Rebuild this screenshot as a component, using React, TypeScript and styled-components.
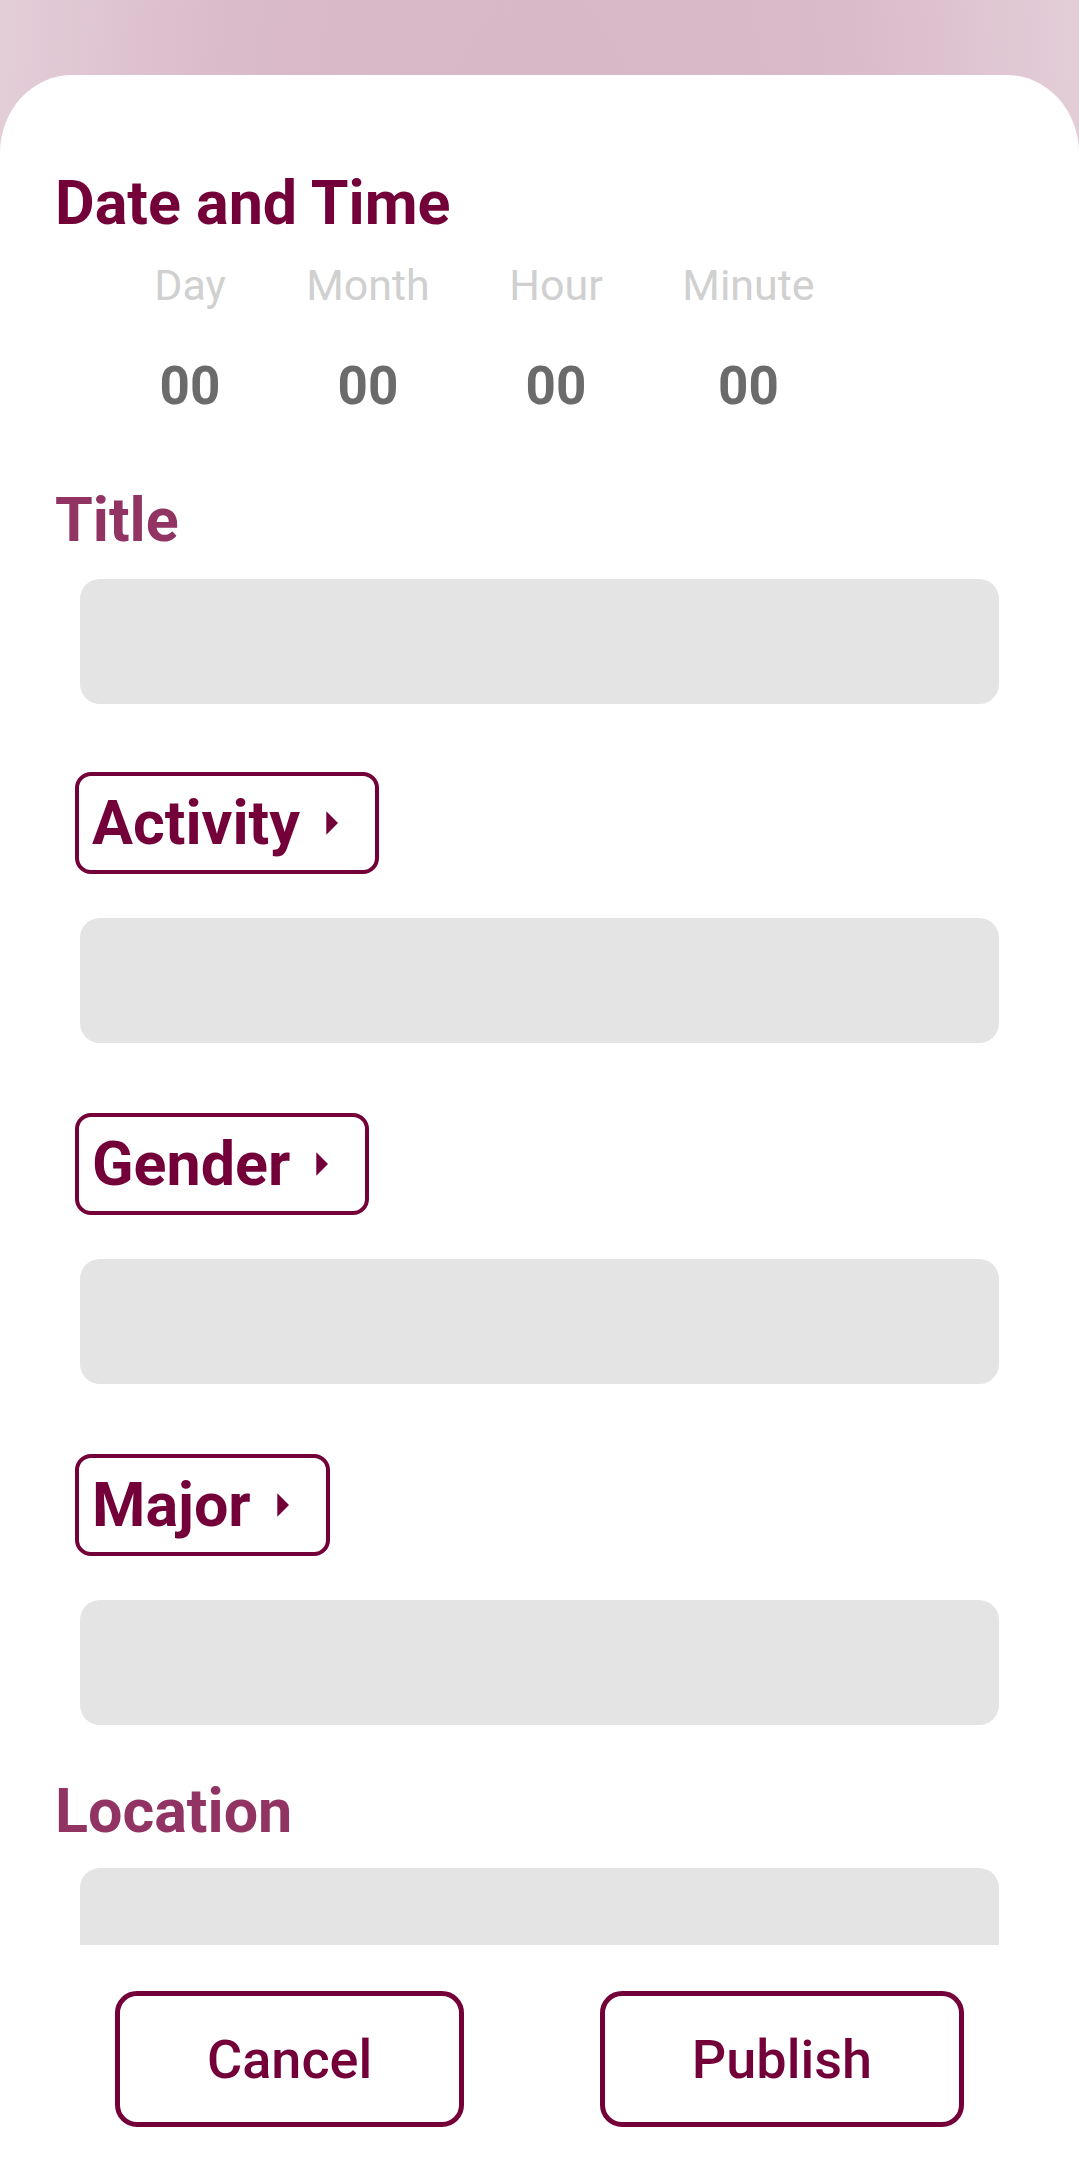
import React from "react";
import styled, { createGlobalStyle } from "styled-components";

const GlobalStyle = createGlobalStyle`
  html, body {
    margin: 0;
    padding: 0;
  }
  body {
    font-family: Roboto, "Noto Sans", "Liberation Sans", sans-serif;
    background: #ffffff;
  }
  * { box-sizing: border-box; }
`;

const MAROON = "#74003a";
const MUTED_MAROON = "#913363";

const Page = styled.div`
  width: 1079px;
  height: 2173px;
  overflow: hidden;
  display: flex;
  flex-direction: column;
  background:
    radial-gradient(ellipse 72% 260% at 50% 100%, #d6b2c3 0%, #dabbc9 55%, #ebdfe5 100%);
`;

const TopSpacer = styled.div`
  height: 75px;
  flex: none;
`;

const Sheet = styled.div`
  flex: 1;
  display: flex;
  flex-direction: column;
  min-height: 0;
  background: #ffffff;
  border-radius: 72px 72px 0 0 / 78px 78px 0 0;
`;

const Form = styled.div`
  flex: 1;
  min-height: 0;
  overflow: hidden;
  display: flex;
  flex-direction: column;
  padding: 92px 80px 0 55px;
`;

const SectionTitle = styled.h1`
  margin: 0;
  font-size: 61px;
  line-height: 72px;
  font-weight: 700;
  color: ${MAROON};
`;

const TimeGrid = styled.div`
  margin: 20px 0 0 101px;
  display: grid;
  grid-template-columns: 68px 120px 88px 129px;
  column-gap: 84px;
  row-gap: 45px;
  justify-items: center;
`;

const TimeLabel = styled.span`
  font-size: 43px;
  line-height: 52px;
  font-weight: 400;
  color: #d0d0d0;
  white-space: nowrap;
`;

const TimeValue = styled.span`
  font-size: 53px;
  line-height: 60px;
  font-weight: 700;
  color: #6b6b6b;
  white-space: nowrap;
`;

const FieldLabel = styled.h2<{ $gap: number }>`
  margin: ${(p) => p.$gap}px 0 0 0;
  font-size: 61px;
  line-height: 72px;
  font-weight: 700;
  color: ${MUTED_MAROON};
`;

const InputBox = styled.div<{ $gap: number }>`
  flex: none;
  margin: ${(p) => p.$gap}px 0 0 25px;
  height: 125px;
  border-radius: 20px;
  background: #e4e4e4;
`;

const Chip = styled.button`
  flex: none;
  align-self: flex-start;
  margin: 70px 0 0 20px;
  height: 102px;
  display: inline-flex;
  align-items: center;
  padding: 0 16px 0 13px;
  border: 4px solid ${MAROON};
  border-radius: 16px;
  background: #ffffff;
  color: ${MAROON};
  font-family: Roboto, "Noto Sans", "Liberation Sans", sans-serif;
  font-size: 61px;
  font-weight: 700;
  line-height: 70px;
  cursor: pointer;

  &:first-of-type {
    margin-top: 68px;
  }
`;

const ChipIcon = styled.svg`
  width: 56px;
  height: 56px;
  margin-left: 3px;
  fill: ${MAROON};
`;

const ButtonBar = styled.div`
  flex: none;
  height: 228px;
  display: flex;
  align-items: center;
  justify-content: space-between;
  padding: 0 115px 0 115px;
  background: #ffffff;
`;

const ActionButton = styled.button`
  height: 136px;
  padding: 0 87px;
  border: 5px solid ${MAROON};
  border-radius: 22px;
  background: #ffffff;
  color: ${MAROON};
  font-family: Roboto, "Noto Sans", "Liberation Sans", sans-serif;
  font-size: 54px;
  font-weight: 500;
  cursor: pointer;
`;

const ArrowRight = () => (
  <ChipIcon viewBox="0 0 24 24" aria-hidden="true">
    <path d="M10 17l5-5-5-5v10z" />
  </ChipIcon>
);

const timeParts = ["Day", "Month", "Hour", "Minute"];

export default function App() {
  return (
    <>
      <GlobalStyle />
      <Page>
        <TopSpacer />
        <Sheet>
          <Form>
            <SectionTitle>Date and Time</SectionTitle>
            <TimeGrid>
              {timeParts.map((p) => (
                <TimeLabel key={p}>{p}</TimeLabel>
              ))}
              {timeParts.map((p) => (
                <TimeValue key={p}>00</TimeValue>
              ))}
            </TimeGrid>

            <FieldLabel $gap={68}>Title</FieldLabel>
            <InputBox $gap={23} />

            <Chip>
              Activity
              <ArrowRight />
            </Chip>
            <InputBox $gap={44} />

            <Chip>
              Gender
              <ArrowRight />
            </Chip>
            <InputBox $gap={44} />

            <Chip>
              Major
              <ArrowRight />
            </Chip>
            <InputBox $gap={44} />

            <FieldLabel $gap={50}>Location</FieldLabel>
            <InputBox $gap={21} />
          </Form>
          <ButtonBar>
            <ActionButton>Cancel</ActionButton>
            <ActionButton>Publish</ActionButton>
          </ButtonBar>
        </Sheet>
      </Page>
    </>
  );
}
